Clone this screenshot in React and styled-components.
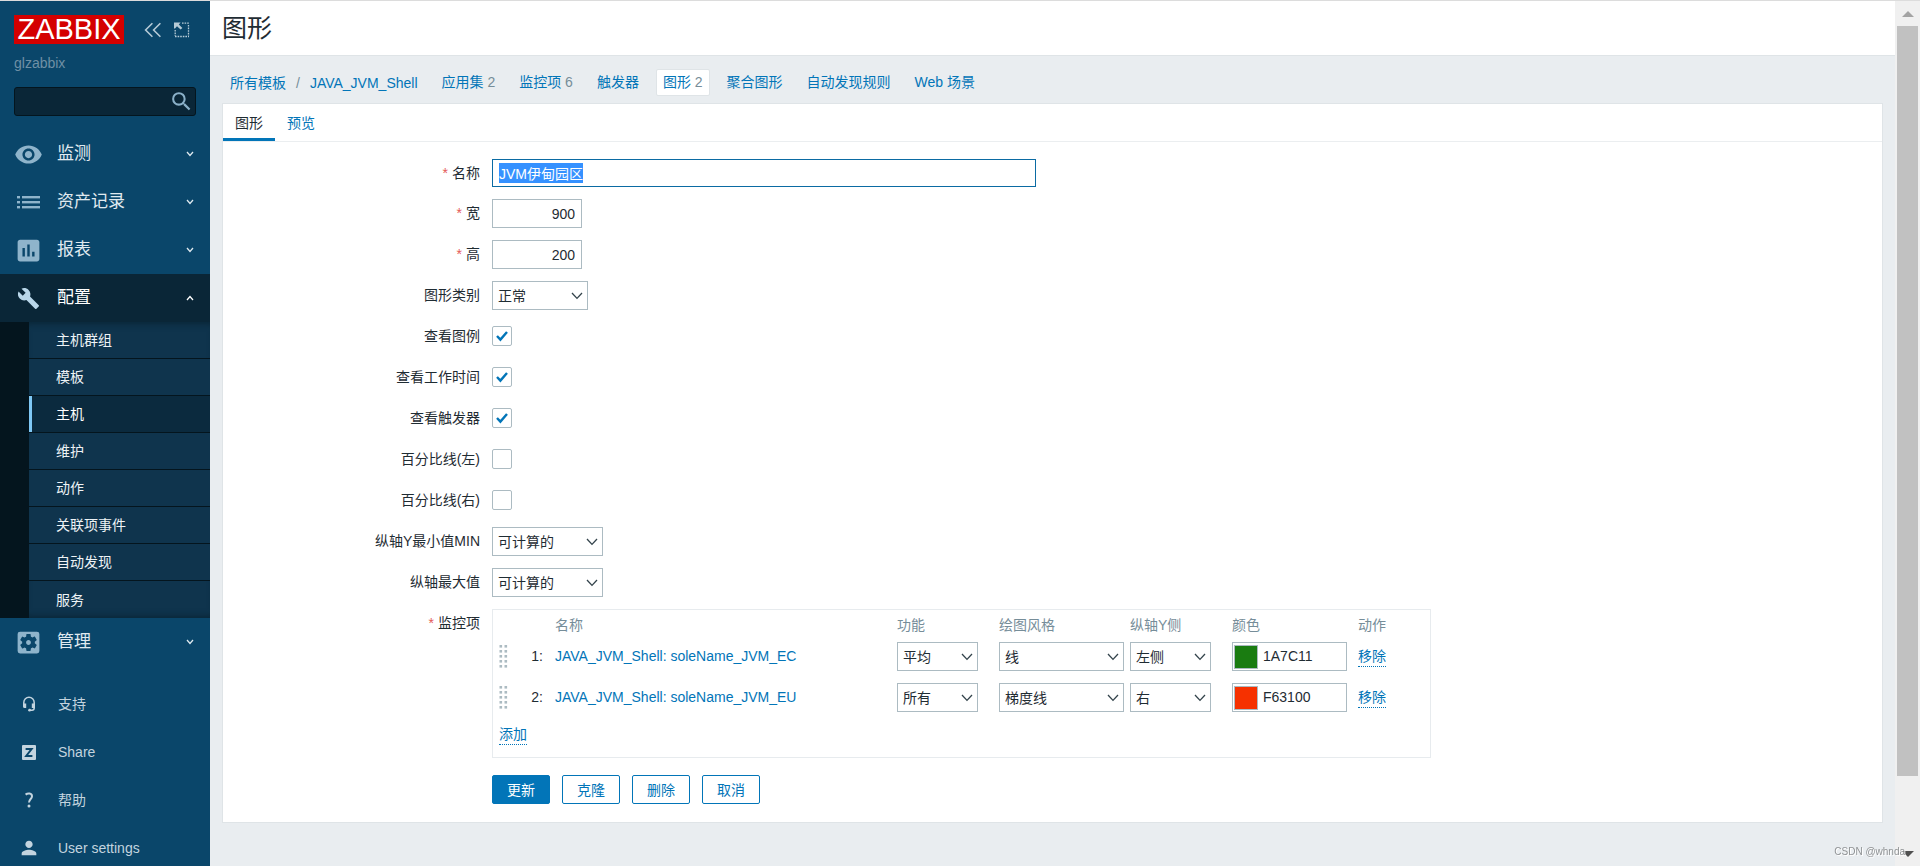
import React, { useEffect, useRef, useState } from "react";
import styled, { createGlobalStyle, css } from "styled-components";
import {
  MdVisibility,
  MdAssessment,
  MdBuild,
  MdSettingsApplications,
  MdSearch,
  MdPerson,
} from "react-icons/md";

const GlobalStyle = createGlobalStyle`
  *, *::before, *::after { box-sizing: border-box; }
  body {
    margin: 0;
    overflow: hidden;
    background: #e9edf0;
    color: #1f2c33;
    font-family: "Liberation Sans", "Noto Sans CJK SC", sans-serif;
    font-size: 14px;
    line-height: 20px;
  }
  a { color: #0275b8; text-decoration: none; }
  button, input, select { font: inherit; color: inherit; margin: 0; }
  ul { list-style: none; margin: 0; padding: 0; }
`;

const Page = styled.div`
  display: grid;
  grid-template-columns: 210px minmax(0, 1fr) 25px;
  grid-template-rows: minmax(0, 1fr);
  height: 100vh;
  border-top: 1px solid #dcdcdc;
`;

/* Sidebar */

const Sidebar = styled.aside`
  display: flex;
  flex-direction: column;
  overflow: hidden;
  background: #0a466a;
  color: #d9e5ec;
`;

const SidebarHeader = styled.div`
  display: flex;
  align-items: center;
  padding: 14px 14px 0;
`;

const Logo = styled.a`
  width: 110px;
  height: 29px;
  background: #d40000;
  color: #fff;
  font-size: 29px;
  line-height: 28px;
  text-align: center;
`;

const IconButton = styled.button`
  display: flex;
  padding: 0;
  border: 0;
  background: none;
  color: #b5cad6;
  cursor: pointer;
`;

const HeaderTools = styled.div`
  display: flex;
  align-items: center;
  gap: 12px;
  margin-left: 20px;
`;

const ServerName = styled.div`
  padding: 9px 14px 0;
  color: #6f90a5;
`;

const SearchForm = styled.form`
  display: flex;
  flex: none;
  align-items: center;
  height: 29px;
  margin: 14px 14px 0;
  padding-right: 1px;
  border: 1px solid #04151e;
  border-radius: 3px;
  background: #0a2637;

  input {
    flex: 1;
    min-width: 0;
    padding: 0 6px;
    border: 0;
    outline: 0;
    background: none;
  }
  button { color: #8ab0c8; }
`;

const Menu = styled.ul`
  flex: none;
  margin-top: 14px;
`;

const MenuLink = styled.a`
  display: grid;
  grid-template-columns: ${(p) => (p.$small ? 58 : 57)}px 1fr 41px;
  align-items: center;
  height: 48px;
  color: ${(p) => (p.$active ? "#ffffff" : "#e0eaf0")};
  background: ${(p) => (p.$active ? "#0a2637" : "transparent")};
  font-size: ${(p) => (p.$small ? 14 : 17)}px;
  ${(p) => p.$small && css`color: #c3d4df;`}
`;

const MenuIcon = styled.span`
  display: flex;
  justify-content: center;
  color: ${(p) => (p.$bright ? "#b9d7ea" : "#8fb4cb")};
  ${(p) => p.$small && css`color: #c3d4df;`}
`;

const Chevron = styled.svg`
  justify-self: center;
  fill: none;
  stroke: currentColor;
  stroke-width: 1.3;
`;

const SubMenu = styled.ul`
  padding-left: 29px;
  background: #04151e;
`;

const SubItem = styled.li`
  height: 37px;
  border-bottom: 1px solid #04151e;
  &:first-child a { box-shadow: inset 0 6px 6px -4px #0a2637; }
  &:last-child { border-bottom: 0; }
  &:last-child a { box-shadow: inset 0 -6px 6px -4px #0a2637; }
`;

const SubLink = styled.a`
  display: flex;
  align-items: center;
  height: 100%;
  padding-left: 27px;
  background: #0f344d;
  color: #eef3f6;
  ${(p) =>
    p.$active &&
    css`
      padding-left: 24px;
      border-left: 3px solid #7fc8f5;
      background: #0b2a3e;
      color: #fff;
    `}
`;

/* Main area */

const Main = styled.main`
  min-width: 0;
  overflow: hidden;
`;

const PageHeader = styled.header`
  padding: 8px 12px;
  height: 55px;
  border-bottom: 1px solid #dfe4e7;
  background: #fff;

  h1 {
    margin: 0;
    font-size: 25px;
    font-weight: 400;
    line-height: 38px;
  }
`;

const NavBar = styled.nav`
  display: flex;
  align-items: center;
  gap: 10px;
  padding: 13px 13px 7px;
`;

const Crumbs = styled.div`
  display: flex;
  gap: 10px;
  padding: 0 7px;
  color: #768d99;
`;

const NavLink = styled.a`
  padding: 2px 6px;
  border: 1px solid ${(p) => (p.$active ? "#dfe4e7" : "transparent")};
  border-radius: 2px;
  background: ${(p) => (p.$active ? "#fff" : "transparent")};
  line-height: 21px;
  white-space: nowrap;
`;

const Count = styled.span`
  color: #768d99;
`;

const Card = styled.section`
  margin: 0 12px;
  padding-bottom: 18px;
  border: 1px solid #dfe4e7;
  background: #fff;
`;

const Tabs = styled.div`
  display: flex;
  border-bottom: 1px solid #ebeef0;
`;

const Tab = styled.button`
  height: 37px;
  padding: 3px 12px 0;
  border: 0;
  border-bottom: 3px solid ${(p) => (p.$active ? "#0275b8" : "transparent")};
  background: none;
  color: ${(p) => (p.$active ? "#1f2c33" : "#0275b8")};
  cursor: pointer;
`;

const Form = styled.form`
  display: grid;
  gap: 12px;
  padding-top: 17px;
`;

const Row = styled.div`
  display: grid;
  grid-template-columns: 257px minmax(0, 1fr);
  column-gap: 12px;
`;

const Label = styled.label`
  text-align: right;
  line-height: 28px;
`;

const Star = styled.span`
  margin-right: 4px;
  color: #e45959;
`;

const TextInput = styled.input`
  display: block;
  width: ${(p) => p.$width}px;
  height: ${(p) => p.$height || 29}px;
  padding: 0 6px;
  border: 1px solid #acbbc2;
  background: #fff;
  text-align: ${(p) => p.$align || "left"};
  &:focus { outline: 0; border-color: #0b6ba3; }
  &::selection { background: rgba(51, 144, 255, 0.99); color: #fff; }
`;

const SelectBox = styled.span`
  display: inline-grid;
  align-items: center;
  width: ${(p) => p.$width}px;
  vertical-align: top;

  select, svg { grid-area: 1 / 1; }
  select {
    width: 100%;
    height: 29px;
    padding: 0 20px 0 5px;
    border: 1px solid #acbbc2;
    border-radius: 0;
    background: #fff;
    appearance: none;
  }
  svg {
    justify-self: end;
    margin-right: 5px;
    pointer-events: none;
    fill: none;
    stroke: #33434b;
    stroke-width: 1.3;
  }
`;

const CheckBoxWrap = styled.span`
  display: grid;
  place-items: center;
  width: 20px;
  height: 20px;
  margin: 4px 0 5px;

  input, svg { grid-area: 1 / 1; }
  input {
    width: 20px;
    height: 20px;
    border: 1px solid #acbbc2;
    border-radius: 2px;
    background: #fff;
    appearance: none;
  }
  svg {
    visibility: hidden;
    pointer-events: none;
    fill: none;
    stroke: #0275b8;
    stroke-width: 2.4;
  }
  input:checked + svg { visibility: visible; }
`;

const TableBox = styled.div`
  justify-self: start;
  padding: 0 6px;
  border: 1px solid #e7ebee;
`;

const ItemsTable = styled.table`
  width: 925px;
  table-layout: fixed;
  border-collapse: collapse;

  th, td { padding: 0; text-align: left; vertical-align: top; }
  th {
    height: 32px;
    color: #768d99;
    font-weight: 400;
    line-height: 30px;
  }
  tbody td { height: 41px; line-height: 29px; }
  tfoot td { height: 33px; }
`;

const NumberCell = styled.td`
  && { padding-right: 12px; text-align: right; }
`;

const DragHandle = styled.svg`
  display: block;
  margin-top: 3px;
  fill: #acbbc2;
`;

const ColorField = styled.span`
  display: flex;
  align-items: center;
  width: 115px;
  height: 29px;
  padding-left: 1px;
  border: 1px solid #acbbc2;

  input {
    flex: 1;
    min-width: 0;
    padding: 0 5px;
    border: 0;
    outline: 0;
    background: none;
  }
`;

const Swatch = styled.button`
  width: 24px;
  height: 24px;
  padding: 0;
  border: 1px solid #acbbc2;
  background: ${(p) => p.$color};
`;

const ActionLink = styled.a`
  display: inline-block;
  border-bottom: 1px dotted #0275b8;
  line-height: 19px;
`;

const Actions = styled.div`
  display: flex;
  gap: 12px;
  margin-top: 5px;
  padding-left: 269px;
`;

const Button = styled.button`
  width: 58px;
  height: 29px;
  padding: 0;
  border: 1px solid #0275b8;
  border-radius: 2px;
  background: ${(p) => (p.$primary ? "#0275b8" : "#fff")};
  color: ${(p) => (p.$primary ? "#fff" : "#0275b8")};
  cursor: pointer;
`;

/* Scroll column */

const ScrollColumn = styled.div`
  display: flex;
  flex-direction: column;
  background: #f0f0f0;
`;

const ScrollArrow = styled.div`
  display: grid;
  place-items: center;
  flex: none;
  height: 25px;
  color: ${(p) => (p.$enabled ? "#505050" : "#a3a3a3")};
`;

const ScrollTrack = styled.div`
  flex: 1;
  padding: 0 2px;
`;

const ScrollThumb = styled.div`
  height: 92%;
  background: #c1c1c1;
`;

const Watermark = styled.div`
  position: fixed;
  right: 15px;
  bottom: 4px;
  color: #8f9294;
  font-size: 10px;
  text-shadow: 1px 1px 0 #fff;
`;

/* Icons */

const ListIcon = () => (
  <svg width="23" height="13" viewBox="0 0 23 13" fill="currentColor">
    {[0, 5, 10].map((y) => (
      <g key={y}>
        <rect x="0" y={y} width="3" height="2.4" />
        <rect x="5" y={y} width="18" height="2.4" />
      </g>
    ))}
  </svg>
);

const HeadsetIcon = () => (
  <svg width="14" height="16" viewBox="0 0 14 16" fill="none" stroke="currentColor" strokeWidth="1.5">
    <path d="M1.8 9V6.4a5.2 5.2 0 0 1 10.4 0V12a2.2 2.2 0 0 1-2.2 2.2H7.5" />
    <path d="M1 7.5h3.2v4.6H2.6A1.6 1.6 0 0 1 1 10.5zM13 7.5H9.8v4.6H13z" fill="currentColor" stroke="none" />
    <circle cx="7.6" cy="14.2" r="1.4" fill="currentColor" stroke="none" />
  </svg>
);

const ShareIcon = () => (
  <svg width="14" height="15" viewBox="0 0 14 15">
    <rect width="14" height="15" rx="1" fill="currentColor" />
    <path d="M3.6 4h6L4.2 11h6.2" fill="none" stroke="#0a466a" strokeWidth="2" />
  </svg>
);

const HelpIcon = () => (
  <svg width="10" height="16" viewBox="0 0 10 16" fill="none" stroke="currentColor" strokeWidth="2">
    <path d="M1.6 2.6C3.6 1 8 .8 8 4.2 8 7 5 7 5 10.6" />
    <circle cx="5" cy="14" r="1.5" fill="currentColor" stroke="none" />
  </svg>
);

const DownIcon = ({ up }) => (
  <Chevron width="8" height="6" viewBox="0 0 8 6" aria-hidden="true">
    <path d={up ? "M1 5l3-3.4L7 5" : "M1 1l3 3.4L7 1"} />
  </Chevron>
);

/* Form parts */

function Select({ id, label, value, options, width }) {
  const [current, setCurrent] = useState(value);
  return (
    <SelectBox $width={width}>
      <select id={id} aria-label={label} value={current} onChange={(e) => setCurrent(e.target.value)}>
        {options.map((o) => (
          <option key={o}>{o}</option>
        ))}
      </select>
      <svg width="12" height="8" viewBox="0 0 12 8" aria-hidden="true">
        <path d="M1 1l5 5.4L11 1" />
      </svg>
    </SelectBox>
  );
}

function FormRow({ id, label, required, children }) {
  return (
    <Row>
      <Label htmlFor={id}>
        {required && <Star>*</Star>}
        {label}
      </Label>
      <div>{children}</div>
    </Row>
  );
}

function CheckRow({ id, label, checked }) {
  return (
    <Row>
      <Label htmlFor={id}>{label}</Label>
      <CheckBoxWrap>
        <input type="checkbox" id={id} defaultChecked={checked} />
        <svg width="14" height="12" viewBox="0 0 14 12" aria-hidden="true">
          <path d="M2 6l3.4 3.6L12 2" />
        </svg>
      </CheckBoxWrap>
    </Row>
  );
}

const submenu = ["主机群组", "模板", "主机", "维护", "动作", "关联项事件", "自动发现", "服务"];

const mainMenu = [
  { text: "监测", icon: <MdVisibility size={29} /> },
  { text: "资产记录", icon: <ListIcon /> },
  { text: "报表", icon: <MdAssessment size={29} /> },
  { text: "配置", icon: <MdBuild size={23} />, active: true },
  { text: "管理", icon: <MdSettingsApplications size={29} /> },
];

const secondaryMenu = [
  { text: "支持", icon: <HeadsetIcon /> },
  { text: "Share", icon: <ShareIcon /> },
  { text: "帮助", icon: <HelpIcon /> },
  { text: "User settings", icon: <MdPerson size={22} /> },
];

const navLinks = [
  { text: "应用集", count: 2 },
  { text: "监控项", count: 6 },
  { text: "触发器" },
  { text: "图形", count: 2, active: true },
  { text: "聚合图形" },
  { text: "自动发现规则" },
  { text: "Web 场景" },
];

const checks = [
  { id: "legend", label: "查看图例", checked: true },
  { id: "worktime", label: "查看工作时间", checked: true },
  { id: "triggers", label: "查看触发器", checked: true },
  { id: "percent-left", label: "百分比线(左)" },
  { id: "percent-right", label: "百分比线(右)" },
];

const items = [
  { name: "JAVA_JVM_Shell: soleName_JVM_EC", fn: "平均", style: "线", side: "左侧", color: "1A7C11" },
  { name: "JAVA_JVM_Shell: soleName_JVM_EU", fn: "所有", style: "梯度线", side: "右", color: "F63100" },
];

const columnWidths = [23, 33, 342, 102, 131, 102, 126, 66];

export default function App() {
  const nameRef = useRef(null);
  useEffect(() => {
    nameRef.current.focus();
    nameRef.current.select();
  }, []);

  return (
    <>
      <GlobalStyle />
      <Page>
        <Sidebar>
          <SidebarHeader>
            <Logo href="#">ZABBIX</Logo>
            <HeaderTools>
              <IconButton aria-label="Collapse">
                <svg width="18" height="16" viewBox="0 0 18 16" fill="none" stroke="currentColor" strokeWidth="1.6">
                  <path d="M8.4 1.2L1.6 8l6.8 6.8M16.4 1.2L9.6 8l6.8 6.8" />
                </svg>
              </IconButton>
              <IconButton aria-label="Kiosk mode">
                <svg width="16" height="16" viewBox="0 0 16 16" fill="none" stroke="currentColor">
                  <path d="M8 1.2h7M14.5 3v11M1 14.5h14M1.2 8v6" strokeWidth="1.3" strokeDasharray="1.6 1" />
                  <path d="M0 .4h6.6L4.8 2.4 8.4 6 6.6 7.6 3 4.2 1 6.4H0z" fill="currentColor" stroke="none" />
                </svg>
              </IconButton>
            </HeaderTools>
          </SidebarHeader>
          <ServerName>glzabbix</ServerName>
          <SearchForm role="search">
            <input aria-label="Search" />
            <IconButton type="button" aria-label="Search">
              <MdSearch size={25} />
            </IconButton>
          </SearchForm>
          <Menu>
            {mainMenu.map((m) => (
              <li key={m.text}>
                <MenuLink href="#" $active={m.active}>
                  <MenuIcon $bright={m.active}>{m.icon}</MenuIcon>
                  <span>{m.text}</span>
                  <DownIcon up={m.active} />
                </MenuLink>
                {m.active && (
                  <SubMenu>
                    {submenu.map((s) => (
                      <SubItem key={s}>
                        <SubLink href="#" $active={s === "主机"}>{s}</SubLink>
                      </SubItem>
                    ))}
                  </SubMenu>
                )}
              </li>
            ))}
          </Menu>
          <Menu>
            {secondaryMenu.map((m) => (
              <li key={m.text}>
                <MenuLink href="#" $small>
                  <MenuIcon $small>{m.icon}</MenuIcon>
                  <span>{m.text}</span>
                </MenuLink>
              </li>
            ))}
          </Menu>
        </Sidebar>

        <Main>
          <PageHeader>
            <h1>图形</h1>
          </PageHeader>
          <NavBar>
            <Crumbs>
              <a href="#">所有模板</a>
              <span>/</span>
              <a href="#">JAVA_JVM_Shell</a>
            </Crumbs>
            {navLinks.map((n) => (
              <NavLink key={n.text} href="#" $active={n.active}>
                {n.text}
                {n.count && <Count> {n.count}</Count>}
              </NavLink>
            ))}
          </NavBar>
          <Card>
            <Tabs role="tablist">
              <Tab role="tab" aria-selected="true" $active>图形</Tab>
              <Tab role="tab" aria-selected="false">预览</Tab>
            </Tabs>
            <Form onSubmit={(e) => e.preventDefault()}>
              <FormRow id="name" label="名称" required>
                <TextInput id="name" ref={nameRef} defaultValue="JVM伊甸园区" $width={544} $height={28} />
              </FormRow>
              <FormRow id="width" label="宽" required>
                <TextInput id="width" defaultValue="900" $width={90} $align="right" />
              </FormRow>
              <FormRow id="height" label="高" required>
                <TextInput id="height" defaultValue="200" $width={90} $align="right" />
              </FormRow>
              <FormRow id="type" label="图形类别">
                <Select id="type" value="正常" options={["正常", "层积的", "饼图", "分解图"]} width={96} />
              </FormRow>
              {checks.map((c) => (
                <CheckRow key={c.id} {...c} />
              ))}
              <FormRow id="ymin" label="纵轴Y最小值MIN">
                <Select id="ymin" value="可计算的" options={["可计算的", "固定的", "监控项"]} width={111} />
              </FormRow>
              <FormRow id="ymax" label="纵轴最大值">
                <Select id="ymax" value="可计算的" options={["可计算的", "固定的", "监控项"]} width={111} />
              </FormRow>
              <Row>
                <Label as="span"><Star>*</Star>监控项</Label>
                <TableBox>
                  <ItemsTable aria-label="监控项">
                    <colgroup>
                      {columnWidths.map((w, i) => (
                        <col key={i} width={w} />
                      ))}
                    </colgroup>
                    <thead>
                      <tr>
                        <th />
                        <th />
                        <th>名称</th>
                        <th>功能</th>
                        <th>绘图风格</th>
                        <th>纵轴Y侧</th>
                        <th>颜色</th>
                        <th>动作</th>
                      </tr>
                    </thead>
                    <tbody>
                      {items.map((it, i) => (
                        <tr key={it.name}>
                          <td>
                            <DragHandle width="10" height="24" viewBox="0 0 10 24" aria-hidden="true">
                              {[0, 5, 10, 15, 20].map((y) => (
                                <g key={y}>
                                  <rect x="0.5" y={y} width="2.6" height="2.6" />
                                  <rect x="5.5" y={y} width="2.6" height="2.6" />
                                </g>
                              ))}
                            </DragHandle>
                          </td>
                          <NumberCell>{i + 1}:</NumberCell>
                          <td><a href="#">{it.name}</a></td>
                          <td><Select label="功能" value={it.fn} options={["所有", "最小", "平均", "最大"]} width={81} /></td>
                          <td><Select label="绘图风格" value={it.style} options={["线", "填充区域", "粗线", "点", "虚线", "梯度线"]} width={125} /></td>
                          <td><Select label="纵轴Y侧" value={it.side} options={["左侧", "右"]} width={81} /></td>
                          <td>
                            <ColorField>
                              <Swatch type="button" aria-label={it.color} $color={`#${it.color}`} />
                              <input aria-label="颜色" defaultValue={it.color} />
                            </ColorField>
                          </td>
                          <td><ActionLink href="#">移除</ActionLink></td>
                        </tr>
                      ))}
                    </tbody>
                    <tfoot>
                      <tr>
                        <td colSpan={8}><ActionLink href="#">添加</ActionLink></td>
                      </tr>
                    </tfoot>
                  </ItemsTable>
                </TableBox>
              </Row>
              <Actions>
                <Button $primary>更新</Button>
                <Button type="button">克隆</Button>
                <Button type="button">删除</Button>
                <Button type="button">取消</Button>
              </Actions>
            </Form>
          </Card>
        </Main>

        <ScrollColumn aria-hidden="true">
          <ScrollArrow>
            <svg width="12" height="6" viewBox="0 0 12 6"><path d="M6 0l6 6H0z" fill="currentColor" /></svg>
          </ScrollArrow>
          <ScrollTrack><ScrollThumb /></ScrollTrack>
          <ScrollArrow $enabled>
            <svg width="12" height="6" viewBox="0 0 12 6"><path d="M6 6l6-6H0z" fill="currentColor" /></svg>
          </ScrollArrow>
        </ScrollColumn>
      </Page>
      <Watermark>CSDN @whnda</Watermark>
    </>
  );
}
